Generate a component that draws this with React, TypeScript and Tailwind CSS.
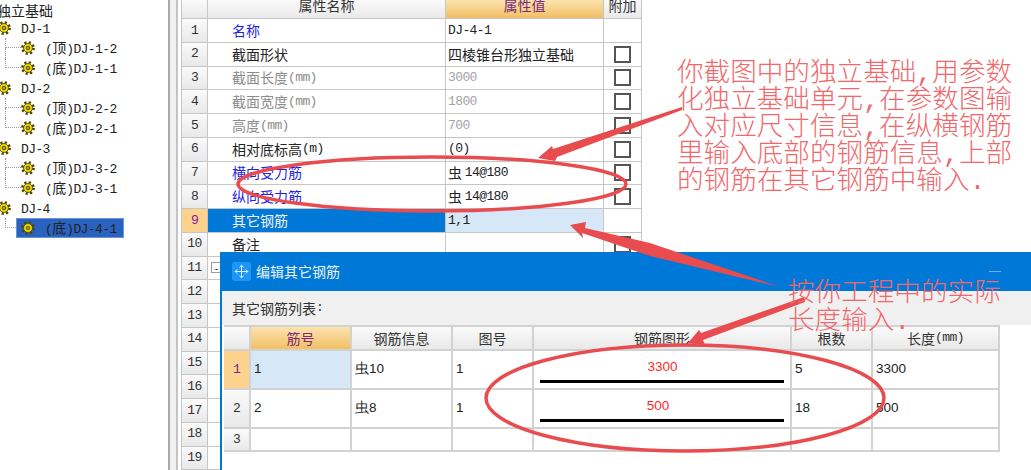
import { Move } from "lucide-react";

const MONO = "font-['Liberation_Mono',monospace] text-[13px] tracking-[-0.6px]";

// ascii runs are narrower than the cjk ones in the screenshot font
function Mixed({ text }: { text: string }) {
  const parts = text.split(/([\x00-\x7f]+)/).filter(Boolean);
  return (
    <>
      {parts.map((p, i) =>
        /^[\x00-\x7f]/.test(p) ? (
          <span key={i} className={MONO}>
            {p}
          </span>
        ) : (
          <span key={i}>{p}</span>
        )
      )}
    </>
  );
}

function Gear() {
  return (
    <svg width="14" height="14" viewBox="0 0 14 14" className="shrink-0">
      <circle cx="7" cy="7" r="5.6" fill="none" stroke="#4f4600" strokeWidth="2.6" strokeDasharray="2.2 2.2" />
      <circle cx="7" cy="7" r="4.4" fill="#f7e600" stroke="#4f4600" strokeWidth="0.9" />
      <circle cx="7" cy="7" r="1.8" fill="#c9a400" stroke="#4f4600" strokeWidth="1" />
    </svg>
  );
}

function TreeChild({ text, last, selected }: { text: string; last?: boolean; selected?: boolean }) {
  return (
    <div className="flex h-5 items-center pl-[5px]">
      <span className="flex flex-col self-start">
        <span className={`h-[10px] border-b border-l border-dotted border-[#999] ${selected ? "w-[11px]" : "w-[16px]"}`} />
        {!last && <span className="h-[10px] border-l border-dotted border-[#999]" />}
      </span>
      <span className={`flex h-5 items-center ${selected ? "w-[108px] bg-[#2a62c0] pl-[5px] outline outline-1 -outline-offset-1 outline-[#6a95dc]" : ""}`}>
        <Gear />
        <span className="ml-[10px] whitespace-nowrap text-[#222]">
          <Mixed text={text} />
        </span>
      </span>
    </div>
  );
}

function TreeGroup({ name, children }: { name: string; children: React.ReactNode }) {
  return (
    <>
      <div className="flex h-5 items-center -ml-[3px]">
        <Gear />
        <span className="ml-[10px] text-[#222]">
          <Mixed text={name} />
        </span>
      </div>
      {children}
    </>
  );
}

function Tree() {
  return (
    <aside className="h-full w-[168px] shrink-0 overflow-hidden bg-white text-[14px] leading-5">
      <div className="-ml-[3px] h-[18px] text-[#222]">独立基础</div>
      <TreeGroup name="DJ-1">
        <TreeChild text="(顶)DJ-1-2" />
        <TreeChild text="(底)DJ-1-1" last />
      </TreeGroup>
      <TreeGroup name="DJ-2">
        <TreeChild text="(顶)DJ-2-2" />
        <TreeChild text="(底)DJ-2-1" last />
      </TreeGroup>
      <TreeGroup name="DJ-3">
        <TreeChild text="(顶)DJ-3-2" />
        <TreeChild text="(底)DJ-3-1" last />
      </TreeGroup>
      <TreeGroup name="DJ-4">
        <TreeChild text="(底)DJ-4-1" last selected />
      </TreeGroup>
    </aside>
  );
}

function Box() {
  return <span className="block h-[17px] w-[17px] border-2 border-[#555] bg-white" />;
}

type Row = { name: string; value: string; tone?: "link" | "gray"; box?: boolean };

const ROWS: Row[] = [
  { name: "名称", value: "DJ-4-1", tone: "link" },
  { name: "截面形状", value: "四棱锥台形独立基础", box: true },
  { name: "截面长度(mm)", value: "3000", tone: "gray", box: true },
  { name: "截面宽度(mm)", value: "1800", tone: "gray", box: true },
  { name: "高度(mm)", value: "700", tone: "gray", box: true },
  { name: "相对底标高(m)", value: "(0)", box: true },
  { name: "横向受力筋", value: "虫\u200914@180", tone: "link", box: true },
  { name: "纵向受力筋", value: "虫\u200914@180", tone: "link", box: true },
  { name: "其它钢筋", value: "1,1" },
  { name: "备注", value: "", box: true },
];

const CELL = "border-b border-r border-[#c6c6c6]";
const HEAD = "bg-gradient-to-b from-[#fafafa] to-[#e9e9e9]";
const HEAD_ON = "bg-gradient-to-b from-[#fbe3ae] to-[#f1bf62] text-[#7b2a7b]";
const NUM_ON = "bg-[#fdd28c] text-[#7b1fa2]";
const GRID_COLS = "grid grid-cols-[26px_238px_158px_38px] h-[23.75px]";

function PropertyGrid() {
  return (
    <div className="ml-[3px] w-[461px] shrink-0 overflow-hidden border-l border-[#c6c6c6] text-[14px]">
      <div className="grid h-[19px] grid-cols-[26px_238px_158px_38px] grid-rows-[19px] overflow-hidden">
        <div className={`${CELL} ${HEAD}`} />
        <div className={`${CELL} ${HEAD} flex items-end justify-center overflow-hidden pb-[3px] leading-5 text-[#333]`}>属性名称</div>
        <div className={`${CELL} ${HEAD_ON} flex items-end justify-center overflow-hidden pb-[3px] leading-5`}>属性值</div>
        <div className={`${CELL} ${HEAD} flex items-end justify-center overflow-hidden pb-[3px] leading-5 text-[#333]`}>附加</div>
      </div>
      {ROWS.map((row, i) => {
        const active = i === 8;
        const nameColor = active
          ? "bg-[#0078d7] text-[#f2f2f2]"
          : row.tone === "link"
            ? "text-[#1f1fe6]"
            : row.tone === "gray"
              ? "text-[#8c8c8c]"
              : "text-[#222]";
        const valueColor = active ? "bg-[#d6e8f7] text-[#222]" : row.tone === "gray" ? "text-[#a3a3a3]" : "text-[#222]";
        return (
          <div key={row.name} className={GRID_COLS}>
            <div className={`${CELL} flex items-center justify-center ${active ? NUM_ON : `${HEAD} text-[#333]`}`}>
              <span className={MONO}>{i + 1}</span>
            </div>
            <div className={`${CELL} flex items-center whitespace-nowrap pl-[24px] ${nameColor}`}>
              <Mixed text={row.name} />
            </div>
            <div className={`${CELL} flex items-center whitespace-nowrap pl-[2px] ${valueColor}`}>
              <Mixed text={row.value} />
            </div>
            <div className={`${CELL} flex items-center justify-center`}>{row.box && <Box />}</div>
          </div>
        );
      })}
      {[11, 12, 13, 14, 15, 16, 17, 18, 19].map((n) => (
        <div key={n} className={GRID_COLS}>
          <div className={`${CELL} ${HEAD} flex items-center justify-center text-[#333]`}>
            <span className={MONO}>{n}</span>
          </div>
          <div className={`${CELL} flex items-center pl-[3px]`}>
            {n === 11 && (
              <span className="flex h-[11px] w-[11px] items-center justify-center border border-[#999] text-[10px] leading-none">
                -
              </span>
            )}
          </div>
          <div className={CELL} />
          <div className={CELL} />
        </div>
      ))}
    </div>
  );
}

const D_CELL = "border-b-2 border-r-2 border-[#d2d2d2] flex items-center";
const D_COLS = "grid grid-cols-[27px_101px_101px_81px_258px_81px_127px]";
const NUM = "font-['Liberation_Sans',sans-serif] text-[13.5px] text-[#222] pl-[3px]";

function BarShape({ label, offset }: { label: string; offset: string }) {
  return (
    <div className={`${D_CELL} flex-col !items-stretch px-[6px]`}>
      <span className={`mt-[8px] text-center font-['Liberation_Sans',sans-serif] text-[13.5px] leading-4 text-[#ff2a2a] ${offset}`}>
        {label}
      </span>
      <span className="mt-[5px] h-[3px] bg-black" />
    </div>
  );
}

function DialogTable() {
  const heads = ["筋号", "钢筋信息", "图号", "钢筋图形", "根数", "长度(mm)"];
  return (
    <div className="ml-[2px] w-[776px] border-t-2 border-[#d2d2d2] bg-white text-[14px] text-[#333]">
      <div className={`${D_COLS} h-[24px]`}>
        <div className={`${D_CELL} ${HEAD}`} />
        {heads.map((h, i) => (
          <div key={h} className={`${D_CELL} justify-center ${i === 0 ? HEAD_ON : HEAD}`}>
            <Mixed text={h} />
          </div>
        ))}
      </div>
      <div className={`${D_COLS} h-[39px]`}>
        <div className={`${D_CELL} justify-center ${NUM_ON}`}>
          <span className={MONO}>1</span>
        </div>
        <div className={`${D_CELL} ${NUM} bg-[#d6e8f7]`}>1</div>
        <div className={`${D_CELL} ${NUM}`}>虫10</div>
        <div className={`${D_CELL} ${NUM}`}>1</div>
        <BarShape label="3300" offset="pl-[1px]" />
        <div className={`${D_CELL} ${NUM}`}>5</div>
        <div className={`${D_CELL} ${NUM}`}>3300</div>
      </div>
      <div className={`${D_COLS} h-[39px]`}>
        <div className={`${D_CELL} ${HEAD} justify-center`}>
          <span className={MONO}>2</span>
        </div>
        <div className={`${D_CELL} ${NUM}`}>2</div>
        <div className={`${D_CELL} ${NUM}`}>虫8</div>
        <div className={`${D_CELL} ${NUM}`}>1</div>
        <BarShape label="500" offset="pr-[8px]" />
        <div className={`${D_CELL} ${NUM}`}>18</div>
        <div className={`${D_CELL} ${NUM}`}>500</div>
      </div>
      <div className={`${D_COLS} h-[23px]`}>
        <div className={`${D_CELL} ${HEAD} justify-center`}>
          <span className={MONO}>3</span>
        </div>
        <div className={D_CELL} />
        <div className={D_CELL} />
        <div className={D_CELL} />
        <div className={D_CELL} />
        <div className={D_CELL} />
        <div className={D_CELL} />
      </div>
    </div>
  );
}

function Dialog() {
  return (
    <div className="absolute bottom-0 left-[220px] right-0 top-[252px] flex flex-col border-l-2 border-[#0078d7] bg-white">
      <div className="flex h-[39px] shrink-0 items-center bg-[#0078d7] pl-[10px] pr-[30px] text-[14px] text-[#e8f2fb]">
        <span className="flex h-[19px] w-[19px] items-center justify-center rounded-[3px] bg-[#1e96f5]">
          <Move size={15} strokeWidth={1.5} color="#eaf5ff" />
        </span>
        <span className="ml-[5px]">编辑其它钢筋</span>
        <span className="ml-auto h-px w-3 bg-[#6fb1e8]" />
      </div>
      <div className="flex h-[34px] shrink-0 items-center bg-[#f0f0f0] pl-[10px] text-[14px] text-[#333]">
        <Mixed text="其它钢筋列表:" />
      </div>
      <DialogTable />
    </div>
  );
}

function Markup() {
  const red = "#e84c4f";
  return (
    <svg className="pointer-events-none absolute inset-0" width="1031" height="470" viewBox="0 0 1031 470">
      <ellipse cx="432" cy="184" rx="194" ry="27" fill="none" stroke={red} strokeWidth="3.5" />
      <ellipse cx="685" cy="398" rx="199" ry="53" fill="none" stroke={red} strokeWidth="3.5" />
      <polygon fill={red} points="538,158 552,146 553,149 682,107 682,110 557,157 555,161" />
      <polygon fill={red} points="570,225 586,222 585,228 650,243 780,287 650,256 582,233 583,238" />
      <polygon fill={red} points="688,343 699,330 701,333 804,297 805,302 703,340 705,345" />
    </svg>
  );
}

const NOTE = "absolute whitespace-pre font-['Liberation_Mono','Noto_Sans_CJK_SC',sans-serif] text-[#f0686c] font-light";

export default function App() {
  return (
    <div className="relative flex h-[470px] w-[1031px] overflow-hidden bg-white font-['Noto_Sans_CJK_SC',sans-serif]">
      <Tree />
      <div className="h-full w-[2px] shrink-0 bg-[#a9a9a9]" />
      <div className="h-full w-[6px] shrink-0 bg-[#f0f0f0]" />
      <div className="h-full w-[2px] shrink-0 bg-[#c4c4c4]" />
      <PropertyGrid />
      <Dialog />
      <Markup />
      <div className={`${NOTE} left-[677px] top-[61px] text-[26.6px] leading-[27px]`}>
        {"你截图中的独立基础,用参数\n化独立基础单元,在参数图输\n入对应尺寸信息,在纵横钢筋\n里输入底部的钢筋信息,上部\n的钢筋在其它钢筋中输入."}
      </div>
      <div className={`${NOTE} left-[788px] top-[280px] text-[26.6px] leading-[28px]`}>
        {"按你工程中的实际\n长度输入."}
      </div>
    </div>
  );
}
